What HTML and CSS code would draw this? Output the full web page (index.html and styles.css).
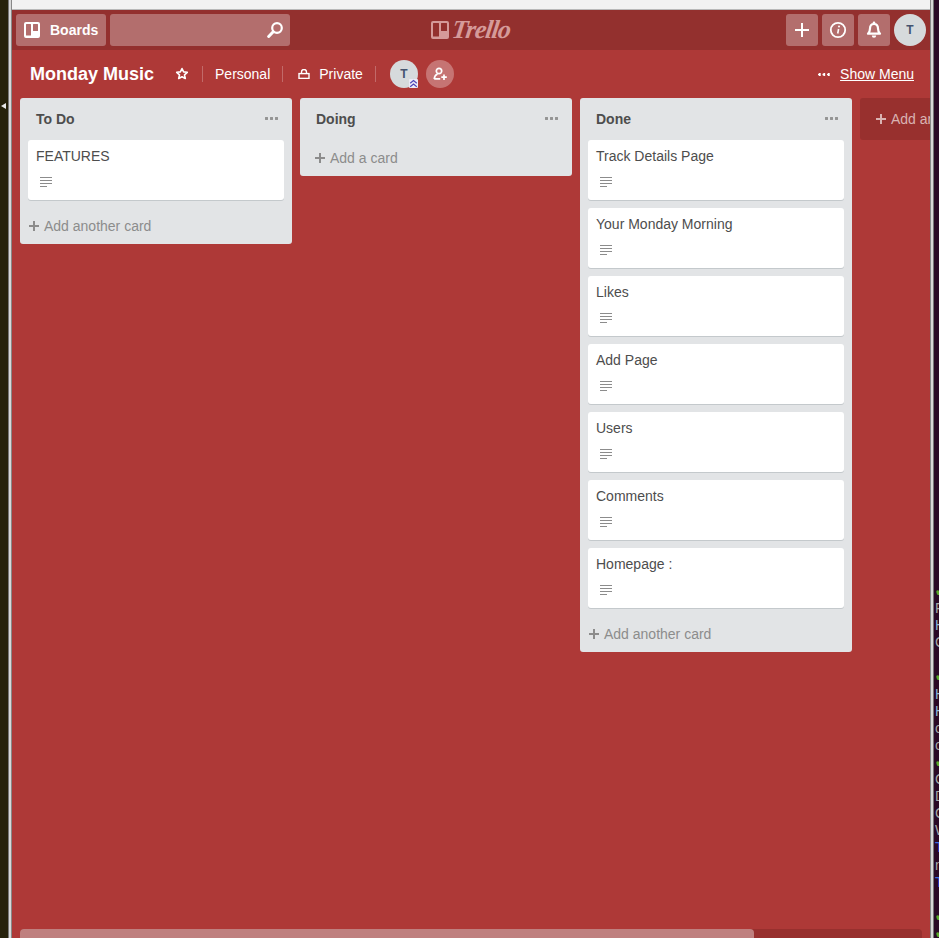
FILE: index.html
```html
<!DOCTYPE html>
<html lang="en">
<head>
    <meta charset="UTF-8">
    <meta name="viewport" content="width=device-width, initial-scale=1.0">
    <title>Monday Music | Trello</title>
    <link rel="stylesheet" href="styles.css">
</head>
<body>
<div class="desktop">
    <div class="side-strip">
        <span class="side-arrow"></span>
    </div>

    <div class="window">
        <div class="window-title"></div>
        <div class="app">
            <header class="topbar">
                <div class="topbar-left">
                    <a class="top-btn boards-btn">
                        <svg class="boards-icon" viewBox="0 0 16 16" width="16" height="16">
                            <path fill="#fff" fill-rule="evenodd" d="M2 0h12a2 2 0 0 1 2 2v12a2 2 0 0 1-2 2H2a2 2 0 0 1-2-2V2a2 2 0 0 1 2-2zm.5 2a.5.5 0 0 0-.5.5v10.500a.5.5 0 0 0 .5.5h4a.5.5 0 0 0 .5-.5V2.500a.5.5 0 0 0-.5-.5zm7 0a.5.5 0 0 0-.5.5V8.500a.5.5 0 0 0 .5.5h4a.5.5 0 0 0 .5-.5V2.500a.5.5 0 0 0-.5-.5z"/>
                        </svg>
                        <span>Boards</span>
                    </a>
                    <div class="top-btn search-box">
                        <svg viewBox="0 0 16 16" width="16" height="16">
                            <circle cx="10" cy="6" r="4.800" fill="none" stroke="#fff" stroke-width="2.200"/>
                            <path d="M6.200 9.800l-4.500 4.700" stroke="#fff" stroke-width="3" stroke-linecap="round"/>
                        </svg>
                    </div>
                </div>

                <div class="logo">
                    <svg viewBox="0 0 18 18" width="18" height="18">
                        <path fill="#d59a99" fill-rule="evenodd" d="M2 0h14a2 2 0 0 1 2 2v14a2 2 0 0 1-2 2H2a2 2 0 0 1-2-2V2a2 2 0 0 1 2-2zm.500 2a.5.5 0 0 0-.5.500v12.500a.5.5 0 0 0 .5.5h5a.5.5 0 0 0 .5-.5V2.500a.5.5 0 0 0-.5-.5zm8 0a.5.5 0 0 0-.5.500V9.500a.5.5 0 0 0 .5.5h5a.5.5 0 0 0 .5-.5V2.500a.5.5 0 0 0-.5-.5z"/>
                    </svg>
                    <span class="logo-text">Trello</span>
                </div>

                <div class="topbar-right">
                    <a class="top-btn icon-btn">
                        <svg viewBox="0 0 16 16" width="16" height="16">
                            <path d="M8 1v14M1 8h14" stroke="#fff" stroke-width="2"/>
                        </svg>
                    </a>
                    <a class="top-btn icon-btn">
                        <svg viewBox="0 0 18 18" width="18" height="18">
                            <circle cx="9" cy="9" r="7.200" fill="none" stroke="#fff" stroke-width="1.800"/>
                            <path d="M9.600 8l-.9 4.500" stroke="#fff" stroke-width="1.600"/>
                            <circle cx="10" cy="5.600" r="1" fill="#fff"/>
                        </svg>
                    </a>
                    <a class="top-btn icon-btn">
                        <svg viewBox="0 0 18 18" width="18" height="18">
                            <path d="M9 3c-2.700 0-4 2-4 4.500 0 3-.8 4-2 5.200h12c-1.200-1.200-2-2.200-2-5.200C13 5 11.700 3 9 3z" fill="none" stroke="#fff" stroke-width="2.200" stroke-linejoin="round"/>
                            <circle cx="9" cy="1.800" r="1.300" fill="#fff"/>
                            <path d="M6.800 14.600h4.400a2.200 2.200 0 0 1-4.400 0z" fill="#fff"/>
                        </svg>
                    </a>
                    <span class="avatar avatar-top">T</span>
                </div>
            </header>

            <main class="board">
                <div class="board-header">
                    <h1 class="board-name">Monday Music</h1>
                    <svg class="star-icon" viewBox="0 0 14 14" width="14" height="14">
                        <path d="M7 1.500l1.600 3.400 3.700.4-2.800 2.500.8 3.700L7 9.700l-3.300 1.800.8-3.700-2.800-2.500 3.700-.4z" fill="none" stroke="#fff" stroke-width="1.600" stroke-linejoin="round"/>
                    </svg>
                    <span class="divider"></span>
                    <span class="header-link">Personal</span>
                    <span class="divider"></span>
                    <svg class="lock-icon" viewBox="0 0 12 10" width="12" height="10">
                        <path d="M3.500 4V3a2.500 2.500 0 0 1 5 0v1" fill="none" stroke="#fff" stroke-width="1.400"/>
                        <rect x="1" y="4.600" width="10" height="4.800" fill="none" stroke="#fff" stroke-width="1.400"/>
                    </svg>
                    <span class="header-link">Private</span>
                    <span class="divider"></span>
                    <span class="member">
                        <span class="avatar avatar-member">T</span>
                        <svg class="admin-badge" viewBox="0 0 9 9" width="9" height="9">
                            <rect width="9" height="9" fill="#eceaf6" rx="1"/>
                            <path d="M1.200 4.200l3.300-2.700 3.300 2.700M1.200 7.700l3.300-2.700 3.300 2.700" fill="none" stroke="#4f45b8" stroke-width="1.200"/>
                        </svg>
                    </span>
                    <span class="invite">
                        <svg viewBox="0 0 14 14" width="14" height="14">
                            <circle cx="6" cy="4" r="2.700" fill="none" stroke="#fff" stroke-width="1.700"/>
                            <path d="M1.200 12c.3-3 2-4.500 3.400-5M1.200 11.800h6" fill="none" stroke="#fff" stroke-width="1.700"/>
                            <path d="M11 7.500v5.500M8.300 10.200h5.500" stroke="#fff" stroke-width="1.700"/>
                        </svg>
                    </span>
                    <div class="show-menu">
                        <span class="menu-dots"></span>
                        <a class="show-menu-link">Show Menu</a>
                    </div>
                </div>

                <div class="lists">
                    <section class="list">
                        <div class="list-header">
                            <h2>To Do</h2>
                            <span class="list-dots"></span>
                        </div>
                        <div class="cards">
                            <div class="card"><p>FEATURES</p><span class="desc-icon"></span></div>
                        </div>
                        <a class="add-card"><span class="plus"></span>Add another card</a>
                    </section>

                    <section class="list">
                        <div class="list-header">
                            <h2>Doing</h2>
                            <span class="list-dots"></span>
                        </div>
                        <a class="add-card add-card-empty"><span class="plus"></span>Add a card</a>
                    </section>

                    <section class="list">
                        <div class="list-header">
                            <h2>Done</h2>
                            <span class="list-dots"></span>
                        </div>
                        <div class="cards">
                            <div class="card"><p>Track Details Page</p><span class="desc-icon"></span></div>
                            <div class="card"><p>Your Monday Morning</p><span class="desc-icon"></span></div>
                            <div class="card"><p>Likes</p><span class="desc-icon"></span></div>
                            <div class="card"><p>Add Page</p><span class="desc-icon"></span></div>
                            <div class="card"><p>Users</p><span class="desc-icon"></span></div>
                            <div class="card"><p>Comments</p><span class="desc-icon"></span></div>
                            <div class="card"><p>Homepage :</p><span class="desc-icon"></span></div>
                        </div>
                        <a class="add-card"><span class="plus"></span>Add another card</a>
                    </section>

                    <a class="add-list"><span class="plus plus-light"></span>Add another list</a>
                </div>

                <div class="scrollbar"><div class="scrollbar-thumb"></div></div>
            </main>
        </div>
    </div>

    <div class="terminal">
        <div class="term-line term-green">✔</div>
        <div class="term-line">Found</div>
        <div class="term-line term-cyan">Hash</div>
        <div class="term-line">Check</div>
        <div class="term-line">&nbsp;</div>
        <div class="term-line term-green">✔</div>
        <div class="term-line term-cyan">Hash</div>
        <div class="term-line term-cyan">Hash</div>
        <div class="term-line">check</div>
        <div class="term-line">check</div>
        <div class="term-line term-green">✔</div>
        <div class="term-line">Chunk</div>
        <div class="term-line">Done</div>
        <div class="term-line">Check</div>
        <div class="term-line">Wait</div>
        <div class="term-line term-blue">Time</div>
        <div class="term-line">node</div>
        <div class="term-line term-blue">Time</div>
        <div class="term-line">&nbsp;</div>
        <div class="term-line term-green">✔</div>
        <div class="term-line term-green">✔</div>
    </div>
</div>
</body>
</html>
```

FILE: styles.css
```css
:root {
  --board-bg: #ae3937;
  --topbar-bg: #93302e;
  --list-bg: #e2e4e6;
  --text-dark: #4d4d4d;
  --text-muted: #8c8c8c;
}

* {
  box-sizing: border-box;
}

html,
body {
  height: 100%;
}

body {
  margin: 0;
  overflow: hidden;
  font-family: "Liberation Sans", Arial, sans-serif;
  font-size: 14px;
  background: #000;
}

.desktop {
  display: flex;
  height: 938px;
}

/* Desktop around the browser window */
.side-strip {
  width: 8px;
  flex: none;
  padding-top: 103px;
  background: #26220b;
}

.side-arrow {
  display: block;
  width: 0;
  height: 0;
  margin-left: 1px;
  border-top: 3.5px solid transparent;
  border-bottom: 3.5px solid transparent;
  border-right: 5px solid #e8e8e8;
}

.window {
  flex: 1;
  min-width: 0;
  display: flex;
  flex-direction: column;
  padding: 0 4px;
  background: linear-gradient(90deg, #777 0, #777 1px, #d8d8d8 1px, #d8d8d8 3px, #888 3px, #888 4px) left top / 4px 100% no-repeat,
    linear-gradient(90deg, #888 0, #888 1px, #d8d8d8 1px, #d8d8d8 3px, #777 3px, #777 4px) right top / 4px 100% no-repeat;
}

.window-title {
  height: 10px;
  flex: none;
  background: #f2f2f2;
  border-bottom: 1px solid #b9b9b9;
}

.terminal {
  width: 5px;
  flex: none;
  overflow: hidden;
  padding-top: 583px;
  background: #2a0a26;
  font-size: 14px;
  line-height: 17px;
  color: #a8a8a8;
  white-space: nowrap;
}

.term-line {
  height: 17.100px;
  padding-left: 1px;
}

.term-green {
  color: #5fa82a;
  font-weight: bold;
}

.term-cyan {
  color: #8fb6d8;
}

.term-blue {
  color: #3a6fe0;
}

/* Trello app */
.app {
  flex: 1;
  min-height: 0;
  display: flex;
  flex-direction: column;
  background: var(--board-bg);
  color: #fff;
}

.topbar {
  height: 40px;
  flex: none;
  display: grid;
  grid-template-columns: 1fr auto 1fr;
  align-items: center;
  padding: 0 4px;
  background: var(--topbar-bg);
}

.topbar-left,
.topbar-right {
  display: flex;
  gap: 4px;
  align-items: center;
}

.topbar-right {
  justify-content: flex-end;
}

.top-btn {
  height: 32px;
  display: flex;
  align-items: center;
  border-radius: 3px;
  background: rgba(255, 255, 255, 0.3);
}

.boards-btn {
  width: 90px;
  padding-left: 8px;
  gap: 10px;
  font-weight: bold;
}

.search-box {
  width: 180px;
  justify-content: flex-end;
  padding-right: 7px;
}

.icon-btn {
  width: 32px;
  justify-content: center;
}

.logo {
  display: flex;
  align-items: center;
  gap: 3px;
}

.logo-text {
  display: inline-block;
  font-family: "Liberation Serif", serif;
  font-style: italic;
  font-size: 26px;
  font-weight: bold;
  line-height: 24px;
  letter-spacing: -1px;
  color: #d59a99;
  transform: skewX(-8deg);
}

.avatar {
  display: flex;
  align-items: center;
  justify-content: center;
  border-radius: 50%;
  background: #d6dadc;
  color: #44546f;
  font-size: 12px;
  font-weight: bold;
}

.avatar-top {
  width: 32px;
  height: 32px;
}

.board {
  flex: 1;
  min-height: 0;
  display: flex;
  flex-direction: column;
}

.board-header {
  height: 48px;
  flex: none;
  display: flex;
  align-items: center;
  padding: 0 16px 0 18px;
}

.board-name {
  margin: 0 21px 0 0;
  font-size: 18px;
  font-weight: bold;
  line-height: 24px;
}

.star-icon {
  flex: none;
  margin-right: 13px;
}

.divider {
  width: 1px;
  height: 16px;
  flex: none;
  background: rgba(255, 255, 255, 0.25);
}

.header-link {
  margin: 0 12px;
  line-height: 20px;
}

.lock-icon {
  flex: none;
  margin: 0 -3px 0 15px;
}

.member {
  position: relative;
  margin-left: 14px;
}

.avatar-member {
  width: 28px;
  height: 28px;
}

.admin-badge {
  position: absolute;
  right: 0;
  bottom: 0;
}

.invite {
  width: 28px;
  height: 28px;
  margin-left: 8px;
  display: flex;
  align-items: center;
  justify-content: center;
  border-radius: 50%;
  background: rgba(255, 255, 255, 0.3);
}

.show-menu {
  margin-left: auto;
  display: flex;
  align-items: center;
  gap: 10px;
}

.menu-dots {
  width: 12px;
  height: 3px;
  background: radial-gradient(circle at 1.500px 1.500px, #fff 1.300px, transparent 1.500px) 0 0 / 4.500px 3px repeat-x;
}

.show-menu-link {
  text-decoration: underline;
  line-height: 20px;
}

/* Lists */
.lists {
  flex: 1;
  min-height: 0;
  display: flex;
  align-items: flex-start;
  gap: 8px;
  padding-left: 8px;
  overflow: hidden;
}

.list {
  width: 272px;
  flex: none;
  border-radius: 3px;
  background: var(--list-bg);
  color: var(--text-dark);
}

.list-header {
  height: 42px;
  display: flex;
  align-items: center;
  justify-content: space-between;
  padding: 0 13px 0 16px;
}

.list-header h2 {
  margin: 0;
  font-size: 14px;
  font-weight: bold;
  line-height: 20px;
}

.list-dots {
  width: 14px;
  height: 3px;
  margin-top: -2px;
  background: radial-gradient(circle at 1.500px 1.500px, #949494 1.400px, transparent 1.600px) 0 0 / 5px 3px repeat-x;
}

.cards {
  padding: 0 8px;
}

.card {
  height: 60px;
  margin-bottom: 8px;
  padding: 6px 8px;
  border-radius: 3px;
  background: #fff;
  box-shadow: 0 1px 0 #c4c9cc;
}

.card p {
  margin: 0;
  font-size: 14px;
  line-height: 20px;
}

.desc-icon {
  display: block;
  width: 12px;
  height: 10px;
  margin: 11px 0 0 4px;
  background:
    linear-gradient(#8c8c8c, #8c8c8c) 0 0 / 100% 1px no-repeat,
    linear-gradient(#8c8c8c, #8c8c8c) 0 3px / 100% 1px no-repeat,
    linear-gradient(#8c8c8c, #8c8c8c) 0 6px / 100% 1px no-repeat,
    linear-gradient(#8c8c8c, #8c8c8c) 0 9px / 7px 1px no-repeat;
}

.add-card {
  height: 36px;
  display: flex;
  align-items: center;
  gap: 5px;
  padding-left: 9px;
  color: var(--text-muted);
}

.add-card-empty {
  padding-left: 15px;
}

.plus {
  width: 10px;
  height: 10px;
  flex: none;
  background:
    linear-gradient(#8c8c8c, #8c8c8c) center / 100% 2px no-repeat,
    linear-gradient(#8c8c8c, #8c8c8c) center / 2px 100% no-repeat;
}

.add-list {
  width: 272px;
  height: 42px;
  flex: none;
  display: flex;
  align-items: center;
  gap: 5px;
  padding-left: 16px;
  border-radius: 3px;
  background: #98302e;
  color: #d9b3b2;
  white-space: nowrap;
}

.plus-light {
  background:
    linear-gradient(#d9b3b2, #d9b3b2) center / 100% 2px no-repeat,
    linear-gradient(#d9b3b2, #d9b3b2) center / 2px 100% no-repeat;
}

.scrollbar {
  height: 9px;
  flex: none;
  margin: 0 8px;
  border-radius: 4px 4px 0 0;
  background: #98302e;
}

.scrollbar-thumb {
  width: 734px;
  height: 100%;
  border-radius: 4px 4px 0 0;
  background: #bf807f;
}
```
